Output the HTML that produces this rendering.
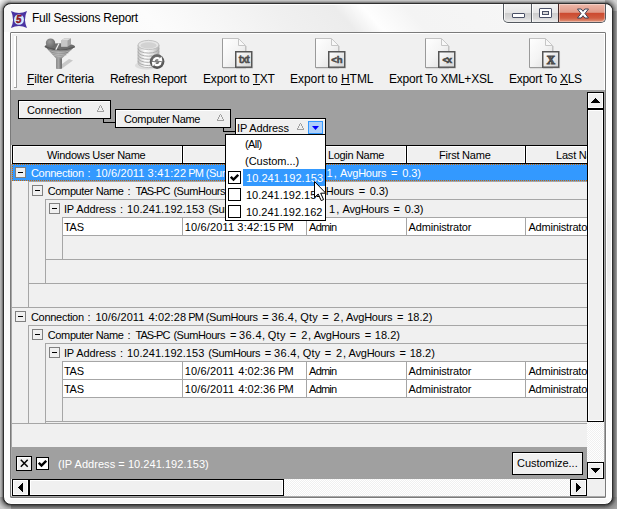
<!DOCTYPE html>
<html>
<head>
<meta charset="utf-8">
<title>Full Sessions Report</title>
<style>
html,body{margin:0;padding:0;}
body{width:617px;height:509px;overflow:hidden;position:relative;background:#fff;font-family:"Liberation Sans",sans-serif;}
*{box-sizing:border-box;}
.abs{position:absolute;}
#shadow{position:absolute;left:0;top:0;width:617px;height:509px;background:#fff;}
.sh{position:absolute;}
#win{position:absolute;left:3px;top:3px;width:610px;height:502px;border:1px solid #303030;border-radius:8px;background:#fbfbfb;box-shadow:inset 0 0 0 1px #fff;}
#client{position:absolute;left:10px;top:32px;width:596px;height:466px;border:1px solid #7a7a7a;border-radius:1px;background:#f0f0f0;box-shadow:inset 0 0 0 1px #fff;}
.t12{font-size:12px;color:#000;white-space:pre;line-height:14px;}
.t11{font-size:11px;color:#000;white-space:pre;line-height:13px;}
.lbl{position:absolute;top:72px;height:14px;}
.lbl u{text-decoration:none;border-bottom:1px solid #000;display:inline-block;line-height:10px;}
.panel{position:absolute;background:#a0a0a0;}
.gbox{position:absolute;height:19px;border:1px solid #000;background:#f0f0f0;box-shadow:inset 1px 1px 0 #fff;}
.hl{position:absolute;height:1px;background:#a6a6a6;}
.vl{position:absolute;width:1px;background:#a6a6a6;}
.blk{position:absolute;background:#000;}
.hcell{position:absolute;top:146px;height:17px;background:#f0f0f0;box-shadow:inset 0 0 0 1px #fff;}
.exp{position:absolute;width:11px;height:11px;border:1px solid #808080;background:#f0f0f0;}
.exp:after{content:"";position:absolute;left:2px;top:4px;width:5px;height:1px;background:#000;}
.cell{position:absolute;background:#fff;height:17px;}
.sbtn{position:absolute;width:17px;height:17px;border:1px solid #000;background:#f0f0f0;box-shadow:inset 0 0 0 1px #fff;}
.dither{position:absolute;background-color:#fff;background-image:linear-gradient(45deg,#f0f0f0 25%,transparent 25%,transparent 75%,#f0f0f0 75%),linear-gradient(45deg,#f0f0f0 25%,transparent 25%,transparent 75%,#f0f0f0 75%);background-size:2px 2px;background-position:0 0,1px 1px;}
.dots{background:repeating-linear-gradient(90deg,#cc6600 0 1px,#3399ff 1px 2px);}
.rowt{height:13px;overflow:visible;}
.sg{position:absolute;top:0;white-space:pre;}
.dotsv{background:repeating-linear-gradient(180deg,#cc6600 0 1px,#3399ff 1px 2px);}
.chk{position:absolute;width:13px;height:13px;border:1px solid #000;background:#fff;}
</style>
</head>
<body>
<div id="shadow"></div>
<div class="sh" style="left:0;top:11px;width:4px;height:486px;background:linear-gradient(90deg,#b4b4b4 0 1px,#a0a0a0 1px 2px,#787878 2px 3px,#303030 3px);"></div>
<div class="sh" style="left:11px;top:0;width:594px;height:4px;background:linear-gradient(180deg,#c4c4c4 0 1px,#a8a8a8 1px 2px,#808080 2px 3px,#303030 3px);"></div>
<div class="sh" style="left:612px;top:11px;width:5px;height:486px;background:linear-gradient(90deg,#303030 0 1px,#5a5a5a 1px 2px,#707070 2px 3px,#808080 3px 4px,#989898 4px);"></div>
<div class="sh" style="left:11px;top:504px;width:594px;height:5px;background:linear-gradient(180deg,#2c2c2c 0 1px,#4a4a4a 1px 2px,#606060 2px 3px,#757575 3px 4px,#888888 4px);"></div>
<div class="sh" style="left:0;top:0;width:11px;height:11px;background:radial-gradient(circle at 11px 11px,#303030 7.9px,#7c7c7c 8.5px,#a4a4a4 9.5px,#bcbcbc 10.5px,#d4d4d4 12px,#f2f2f2 15px);"></div>
<div class="sh" style="left:605px;top:0;width:12px;height:11px;background:radial-gradient(circle at 0 11px,#303030 7.9px,#6a6a6a 8.5px,#888888 9.5px,#9c9c9c 10.5px,#b0b0b0 11.5px,#d0d0d0 14px);"></div>
<div class="sh" style="left:0;top:497px;width:11px;height:12px;background:radial-gradient(circle at 11px 0,#303030 7.9px,#606060 8.5px,#808080 9.5px,#949494 10.5px,#a8a8a8 11.5px,#c8c8c8 14px);"></div>
<div class="sh" style="left:605px;top:497px;width:12px;height:12px;background:radial-gradient(circle at 0 0,#303030 7.9px,#505050 8.5px,#666666 9.5px,#787878 10.5px,#8c8c8c 11.5px,#a0a0a0 15px);"></div>
<div id="win"></div>

<div class="abs" style="left:5px;top:31px;width:5px;height:468px;background:linear-gradient(180deg,#fcfcfc 0,#fafafa 120px,#f7f7f7 190px,#f7f7f7 250px,#fdfdfd 340px);"></div>
<div class="abs" style="left:607px;top:31px;width:4px;height:468px;background:linear-gradient(180deg,#fdfdfd 0,#fdfdfd 150px,#ededed 195px,#ededed 240px,#fbfbfb 290px,#fdfdfd 468px);"></div>
<div class="abs" style="left:606px;top:31px;width:1px;height:468px;background:#fff;"></div>
<div class="abs" style="left:10px;top:499px;width:597px;height:4px;background:#f8f8f8;"></div>
<div class="abs" style="left:10px;top:498px;width:597px;height:1px;background:#fff;"></div>
<div class="abs" style="left:4px;top:5px;width:608px;height:27px;border-radius:5px 5px 0 0;background:linear-gradient(48deg,#f7f7f7 12px,#fcfcfc 118px,#f0f0f0 215px,#ececec 262px,#fefefe 283px,#f4f4f4 315px,#f6f6f6 400px,#fcfcfc 452px);"></div>
<!-- title -->
<svg class="abs" style="left:11px;top:11px" width="16" height="17" viewBox="0 0 17 17" preserveAspectRatio="none">
  <path d="M0 0 Q8.5 4.2 17 0 Q12.8 8.5 17 17 Q8.5 12.8 0 17 Q4.2 8.5 0 0Z" fill="#4a34a2"/>
  <circle cx="8.5" cy="8.5" r="5.3" fill="#d2ebff"/>
  <text x="8.3" y="12.4" font-size="10.5" font-weight="bold" font-style="italic" fill="#9c1424" stroke="#7a0c18" stroke-width=".4" text-anchor="middle" font-family="Liberation Sans, sans-serif">5</text>
</svg>
<div class="abs t12" id="title" style="left:32px;letter-spacing:-0.24px;top:11px;">Full Sessions Report</div>

<!-- caption buttons -->
<div class="abs" id="capbtns" style="left:503px;top:4px;width:103px;height:19px;border:1px solid #555a60;border-top:none;border-radius:0 0 5px 5px;overflow:hidden;background:linear-gradient(#f2f2f2,#e6e6e6 48%,#cdcdcd 52%,#dadada 80%,#eeeeee);box-shadow:1px 1px 0 rgba(255,255,255,.7),-1px 1px 0 rgba(255,255,255,.7);">
  <div class="abs" style="left:0;top:0;width:1px;height:18px;background:rgba(255,255,255,.8);"></div>
  <div class="abs" style="left:27px;top:0;width:1px;height:19px;background:#555a60;"></div>
  <div class="abs" style="left:28px;top:0;width:1px;height:18px;background:rgba(255,255,255,.8);"></div>
  <div class="abs" style="left:54px;top:0;width:1px;height:19px;background:#4a2a28;"></div>
  <div class="abs" style="left:55px;top:0;width:46px;height:18px;background:linear-gradient(#eeb8aa,#e09a88 46%,#cc4a30 52%,#d05c40 78%,#e2987e);box-shadow:inset 0 0 0 1px rgba(255,255,255,.35);border-radius:0 0 4px 0;"></div>
  <div class="abs" style="left:8px;top:9px;width:13px;height:5px;border:1px solid #4a5066;background:#fff;border-radius:1px;"></div>
  <div class="abs" style="left:35px;top:4px;width:13px;height:10px;border:1px solid #4a5066;background:#fff;border-radius:1px;"></div>
  <div class="abs" style="left:38px;top:7px;width:7px;height:4px;border:1px solid #4a5066;background:#d8d8d8;"></div>
  <svg class="abs" style="left:72px;top:4px" width="14" height="11" viewBox="0 0 14 11"><path d="M1.5 1 H5.2 L7 3.3 L8.8 1 H12.5 L9 5.5 L12.5 10 H8.8 L7 7.7 L5.2 10 H1.5 L5 5.5 Z" fill="#fff" stroke="#3b4256" stroke-width="1" stroke-linejoin="round"/></svg>
</div>

<div id="client"></div>

<!-- toolbar -->
<div class="abs" style="left:14px;top:36px;width:3px;height:52px;background:#fff;border-right:1px solid #a0a0a0;border-bottom:1px solid #a0a0a0;"></div>

<div class="lbl t12" id="l1" style="left:27px;letter-spacing:-0.11px;"><u>F</u>ilter Criteria</div>
<div class="lbl t12" id="l2" style="left:110px;letter-spacing:-0.35px;">Refresh Report</div>
<div class="lbl t12" id="l3" style="left:203px;letter-spacing:-0.18px;">Export to <u>T</u>XT</div>
<div class="lbl t12" id="l4" style="left:290px;letter-spacing:-0.04px;">Export to <u>H</u>TML</div>
<div class="lbl t12" id="l5" style="left:389px;letter-spacing:-0.24px;">Export To XML+XSL</div>
<div class="lbl t12" id="l6" style="left:509px;letter-spacing:-0.29px;">Export To <u>X</u>LS</div>

<svg width="0" height="0" style="position:absolute">
 <defs>
  <linearGradient id="pg" x1="0" y1="0" x2="1" y2="1"><stop offset="0" stop-color="#ffffff"/><stop offset=".5" stop-color="#f4f4f4"/><stop offset="1" stop-color="#dcdcdc"/></linearGradient>
  <linearGradient id="bg" x1="0" y1="0" x2="1" y2="1"><stop offset="0" stop-color="#ffffff"/><stop offset="1" stop-color="#d4d4d4"/></linearGradient>
  <linearGradient id="stem" x1="0" y1="0" x2="1" y2="0"><stop offset="0" stop-color="#8a8a8a"/><stop offset=".45" stop-color="#a8a8a8"/><stop offset="1" stop-color="#5e5e5e"/></linearGradient>
  <linearGradient id="cone" x1="0" y1="0" x2="1" y2="0"><stop offset="0" stop-color="#6a6a6a"/><stop offset=".45" stop-color="#a4a4a4"/><stop offset="1" stop-color="#666666"/></linearGradient>
  <radialGradient id="sph" cx=".4" cy=".35" r=".7"><stop offset="0" stop-color="#9c9c9c"/><stop offset="1" stop-color="#666"/></radialGradient>
  <linearGradient id="cyl" x1="0" y1="0" x2="1" y2="0"><stop offset="0" stop-color="#c8c8c8"/><stop offset=".35" stop-color="#ffffff"/><stop offset=".7" stop-color="#e2e2e2"/><stop offset="1" stop-color="#b0b0b0"/></linearGradient>
  <radialGradient id="rc" cx=".5" cy=".4" r=".6"><stop offset="0" stop-color="#8c8c8c"/><stop offset="1" stop-color="#4a4a4a"/></radialGradient>
  
 </defs>
</svg>
<!-- filter funnel -->
<svg class="abs" style="left:44px;top:38px" width="32" height="32" viewBox="0 0 32 32">
  <defs><filter id="bl" x="-20%" y="-20%" width="140%" height="140%"><feGaussianBlur stdDeviation="0.7"/></filter></defs>
  <path d="M18 30.5 L29 22.5 L25 21 L18 26 Z" fill="#b8b8b8" opacity=".7" filter="url(#bl)"/>
  <path d="M0.8 8.2 Q15.8 14.5 30.9 8.6 L17.8 20.6 V30.4 Q15 31.4 12.1 30.4 V20.6 Z" fill="url(#cone)"/>
  <rect x="12.1" y="20.4" width="5.7" height="10.2" fill="url(#stem)"/>
  <ellipse cx="15.8" cy="8.4" rx="15" ry="3.1" fill="#6e6e6e"/>
  <path d="M0.8 8.4 Q15.8 15.2 30.9 8.7" stroke="#585858" stroke-width="1.2" fill="none"/>
  <path d="M4.2 12.3 Q15.8 16.6 27.4 12.4 M6.6 14.8 Q15.8 18.4 25 14.9 M9 17.2 Q15.8 19.8 22.6 17.3" stroke="#c4c4c4" stroke-width=".8" fill="none" opacity=".75"/>
  <circle cx="6.5" cy="5.1" r="4.7" fill="url(#sph)"/>
  <path d="M17.1 2.6 L20.4 0.2 H27 V6.4 L23.5 8.7 H17.1 Z" fill="#a2a2a2"/>
  <path d="M17.1 2.6 H23.5 V8.7 H17.1 Z" fill="#c6c6c6"/>
  <path d="M17.1 2.6 L20.4 0.2 H27 L23.5 2.6 Z" fill="#dcdcdc"/>
  <path d="M15 5.4 L11.8 11.8" stroke="#f2f2f2" stroke-width="1.2"/>
</svg>
<!-- refresh db -->
<svg class="abs" style="left:132px;top:38px" width="34" height="32" viewBox="0 0 34 32">
  <ellipse cx="15" cy="27.5" rx="12" ry="4" fill="#d4d4d4" opacity=".7"/>
  <path d="M6 7 V25 A10.5 4.6 0 0 0 27 25 V7 Z" fill="url(#cyl)" stroke="#b4b4b4" stroke-width=".8"/>
  <path d="M6 10.5 A10.5 4.6 0 0 0 27 10.5 M6 13.6 A10.5 4.6 0 0 0 27 13.6 M6 16.7 A10.5 4.6 0 0 0 27 16.7 M6 19.8 A10.5 4.6 0 0 0 27 19.8 M6 22.9 A10.5 4.6 0 0 0 27 22.9" stroke="#adadad" stroke-width="1" fill="none"/>
  <ellipse cx="16.5" cy="7" rx="10.5" ry="4.6" fill="#e6e6e6" stroke="#b8b8b8" stroke-width=".8"/>
  <ellipse cx="16.5" cy="7.4" rx="8" ry="3.1" fill="#d2d2d2"/>
  <circle cx="25.1" cy="23.6" r="7.3" fill="url(#rc)"/>
  <path d="M21.6 23.2 A3.6 3.6 0 0 1 27.4 20.8" stroke="#fff" stroke-width="2.2" fill="none"/>
  <path d="M28.6 24 A3.6 3.6 0 0 1 22.8 26.4" stroke="#fff" stroke-width="2.2" fill="none"/>
  <path d="M25.6 22.6 L30.4 23.4 L29.6 18.6 Z" fill="#fff"/>
  <path d="M24.6 24.6 L19.8 23.8 L20.6 28.6 Z" fill="#fff"/>
</svg>
<!-- docs -->
<svg class="abs" style="left:222px;top:38px" width="32" height="32" viewBox="0 0 32 32"><g><path d="M1 30.6 h23" stroke="#c8c8c8" stroke-width="1" fill="none" opacity=".6"/>
   <path d="M0.5 0.5 H16.5 L23.5 7.5 V29.5 H0.5 Z" fill="url(#pg)" stroke="#c2c2c2"/>
   <path d="M0.5 0.5 V29.5 H13" fill="none" stroke="#9a9a9a"/>
   <path d="M16.5 1 V7.5 H23" fill="#f8f8f8" stroke="#c6c6c6" stroke-linejoin="round"/>
   <path d="M24.5 8 V13" stroke="#d8d8d8" fill="none"/>
   <rect x="13.75" y="13.75" width="16" height="15.5" fill="url(#bg)" stroke="#565656" stroke-width="1.5"/>
   <path d="M14 30.2 H30.6 V14" stroke="#9a9a9a" stroke-width=".8" fill="none" opacity=".5"/></g><text x="21.9" y="25.4" font-size="10.5" font-weight="bold" fill="#4c4c4c" stroke="#4c4c4c" stroke-width=".4" text-anchor="middle" letter-spacing="-0.9" font-family="Liberation Sans, sans-serif">txt</text></svg>
<svg class="abs" style="left:315px;top:38px" width="32" height="32" viewBox="0 0 32 32"><g><path d="M1 30.6 h23" stroke="#c8c8c8" stroke-width="1" fill="none" opacity=".6"/>
   <path d="M0.5 0.5 H16.5 L23.5 7.5 V29.5 H0.5 Z" fill="url(#pg)" stroke="#c2c2c2"/>
   <path d="M0.5 0.5 V29.5 H13" fill="none" stroke="#9a9a9a"/>
   <path d="M16.5 1 V7.5 H23" fill="#f8f8f8" stroke="#c6c6c6" stroke-linejoin="round"/>
   <path d="M24.5 8 V13" stroke="#d8d8d8" fill="none"/>
   <rect x="13.75" y="13.75" width="16" height="15.5" fill="url(#bg)" stroke="#565656" stroke-width="1.5"/>
   <path d="M14 30.2 H30.6 V14" stroke="#9a9a9a" stroke-width=".8" fill="none" opacity=".5"/></g><text x="21.9" y="25.2" font-size="9.5" font-weight="bold" fill="#484848" stroke="#484848" stroke-width=".55" text-anchor="middle" letter-spacing="0" font-family="Liberation Sans, sans-serif">&lt;h</text></svg>
<svg class="abs" style="left:425px;top:38px" width="32" height="32" viewBox="0 0 32 32"><g><path d="M1 30.6 h23" stroke="#c8c8c8" stroke-width="1" fill="none" opacity=".6"/>
   <path d="M0.5 0.5 H16.5 L23.5 7.5 V29.5 H0.5 Z" fill="url(#pg)" stroke="#c2c2c2"/>
   <path d="M0.5 0.5 V29.5 H13" fill="none" stroke="#9a9a9a"/>
   <path d="M16.5 1 V7.5 H23" fill="#f8f8f8" stroke="#c6c6c6" stroke-linejoin="round"/>
   <path d="M24.5 8 V13" stroke="#d8d8d8" fill="none"/>
   <rect x="13.75" y="13.75" width="16" height="15.5" fill="url(#bg)" stroke="#565656" stroke-width="1.5"/>
   <path d="M14 30.2 H30.6 V14" stroke="#9a9a9a" stroke-width=".8" fill="none" opacity=".5"/></g><text x="21.7" y="24.8" font-size="9.5" font-weight="bold" fill="#484848" stroke="#484848" stroke-width=".6" text-anchor="middle" letter-spacing="-1.2" font-family="Liberation Sans, sans-serif">&lt;x</text></svg>
<svg class="abs" style="left:529px;top:38px" width="32" height="32" viewBox="0 0 32 32"><g><path d="M1 30.6 h23" stroke="#c8c8c8" stroke-width="1" fill="none" opacity=".6"/>
   <path d="M0.5 0.5 H16.5 L23.5 7.5 V29.5 H0.5 Z" fill="url(#pg)" stroke="#c2c2c2"/>
   <path d="M0.5 0.5 V29.5 H13" fill="none" stroke="#9a9a9a"/>
   <path d="M16.5 1 V7.5 H23" fill="#f8f8f8" stroke="#c6c6c6" stroke-linejoin="round"/>
   <path d="M24.5 8 V13" stroke="#d8d8d8" fill="none"/>
   <rect x="13.75" y="13.75" width="16" height="15.5" fill="url(#bg)" stroke="#565656" stroke-width="1.5"/>
   <path d="M14 30.2 H30.6 V14" stroke="#9a9a9a" stroke-width=".8" fill="none" opacity=".5"/></g><text x="21.8" y="26.2" font-size="11.5" font-weight="bold" fill="#6a6a6a" stroke="#484848" stroke-width="1" text-anchor="middle" font-family="Liberation Serif, serif">X</text></svg>


<!-- group panel -->
<div class="panel" style="left:11px;top:90px;width:576px;height:56px;"></div>
<div class="blk" style="left:103px;top:119px;width:1px;height:4px;"></div>
<div class="blk" style="left:103px;top:122px;width:13px;height:1px;"></div>
<div class="blk" style="left:223px;top:128px;width:1px;height:4px;"></div>
<div class="blk" style="left:223px;top:131px;width:13px;height:1px;"></div>
<div class="gbox" style="left:18px;top:100px;width:93px;"></div>
<div class="gbox" style="left:115px;top:109px;width:116px;"></div>
<div class="gbox" style="left:235px;top:118px;width:91px;"></div>
<div class="abs t11" id="g1" style="left:27px;letter-spacing:-0.12px;top:104px;">Connection</div>
<div class="abs t11" id="g2" style="left:124px;letter-spacing:-0.36px;top:113px;">Computer Name</div>
<div class="abs t11" id="g3" style="left:237px;letter-spacing:-0.11px;top:122px;">IP Address</div>

<!-- grid area -->
<div class="abs" style="left:11px;top:145px;width:576px;height:302px;background:#f0f0f0;"></div>

<div class="blk" style="left:12px;top:145px;width:575px;height:1px;"></div>
<div class="blk" style="left:12px;top:163px;width:575px;height:1px;"></div>
<div class="blk" style="left:12px;top:145px;width:1px;height:19px;"></div>
<div class="hcell" style="left:13px;width:169px;"></div>
<div class="blk" style="left:182px;top:145px;width:1px;height:19px;"></div>
<div class="hcell" style="left:183px;width:123px;"></div>
<div class="blk" style="left:306px;top:145px;width:1px;height:19px;"></div>
<div class="hcell" style="left:307px;width:99px;"></div>
<div class="blk" style="left:406px;top:145px;width:1px;height:19px;"></div>
<div class="hcell" style="left:407px;width:118px;"></div>
<div class="blk" style="left:525px;top:145px;width:1px;height:19px;"></div>
<div class="hcell" style="left:526px;width:61px;"></div>
<div class="abs t11" id="h1" style="left:47px;letter-spacing:-0.29px;top:149px;">Windows User Name</div>
<div class="abs t11" id="h3" style="left:328px;letter-spacing:-0.33px;top:149px;">Login Name</div>
<div class="abs t11" id="h4" style="left:439px;letter-spacing:-0.22px;top:149px;">First Name</div>
<div class="abs" style="left:526px;top:146px;width:61px;height:17px;overflow:hidden;"><div class="abs t11" id="h5" style="left:30px;top:3px;letter-spacing:-0.2px;">Last Name</div></div>
<div class="vl" style="left:11px;top:164px;height:283px;"></div>
<div class="abs" style="left:12px;top:164px;width:575px;height:17px;background:#3399ff;"></div>
<div class="abs dots" style="left:12px;top:164px;width:575px;height:1px;"></div>
<div class="abs dots" style="left:12px;top:180px;width:575px;height:1px;"></div>
<div class="abs dotsv" style="left:12px;top:164px;width:1px;height:17px;"></div>
<div class="exp" style="left:15px;top:167px;"></div>
<div class="abs t11 rowt" style="left:0;top:167px;width:587px;color:#fff;"><span class="sg" style="left:30.9px;letter-spacing:-0.28px;">Connection </span><span class="sg" style="left:87.6px;letter-spacing:0px;">: </span><span class="sg" style="left:95.4px;letter-spacing:0.11px;">10/6/2011 </span><span class="sg" style="left:147.5px;letter-spacing:0.32px;">3:41:22 </span><span class="sg" style="left:188.3px;letter-spacing:-1.0px;">PM </span><span class="sg" style="left:205.8px;letter-spacing:-0.42px;">(SumHours </span><span class="sg" style="left:262.3px;letter-spacing:0px;">= </span><span class="sg" style="left:272.4px;letter-spacing:0.17px;">0.3, </span><span class="sg" style="left:294.2px;letter-spacing:0.25px;">Qty </span><span class="sg" style="left:316.2px;letter-spacing:0px;">= </span><span class="sg" style="left:326.6px;letter-spacing:1.0px;">1, </span><span class="sg" style="left:340.1px;letter-spacing:-0.24px;">AvgHours </span><span class="sg" style="left:391.1px;letter-spacing:0px;">= </span><span class="sg" style="left:402.2px;letter-spacing:-0.1px;">0.3) </span></div>
<div class="hl" style="left:28px;top:181px;width:559px;"></div>
<div class="exp" style="left:32px;top:185px;"></div>
<div class="abs t11 rowt" style="left:0;top:185px;width:587px;"><span class="sg" style="left:47.8px;letter-spacing:-0.38px;">Computer Name </span><span class="sg" style="left:127.5px;letter-spacing:0px;">: </span><span class="sg" style="left:135.4px;letter-spacing:-0.9px;">TAS-PC </span><span class="sg" style="left:173.4px;letter-spacing:-0.43px;">(SumHours </span><span class="sg" style="left:229.9px;letter-spacing:0px;">= </span><span class="sg" style="left:240.0px;letter-spacing:0.17px;">0.3, </span><span class="sg" style="left:261.8px;letter-spacing:0.25px;">Qty </span><span class="sg" style="left:283.8px;letter-spacing:0px;">= </span><span class="sg" style="left:294.2px;letter-spacing:1.0px;">1, </span><span class="sg" style="left:307.7px;letter-spacing:-0.24px;">AvgHours </span><span class="sg" style="left:358.7px;letter-spacing:0px;">= </span><span class="sg" style="left:369.8px;letter-spacing:-0.1px;">0.3) </span></div>
<div class="hl" style="left:45px;top:199px;width:542px;"></div>
<div class="exp" style="left:49px;top:203px;"></div>
<div class="abs t11 rowt" style="left:0;top:203px;width:587px;"><span class="sg" style="left:63.9px;letter-spacing:-0.11px;">IP Address </span><span class="sg" style="left:119.9px;letter-spacing:0px;">: </span><span class="sg" style="left:127.1px;letter-spacing:0.06px;">10.241.192.153 </span><span class="sg" style="left:208.3px;letter-spacing:-0.42px;">(SumHours </span><span class="sg" style="left:264.8px;letter-spacing:0px;">= </span><span class="sg" style="left:274.9px;letter-spacing:0.17px;">0.3, </span><span class="sg" style="left:296.7px;letter-spacing:0.25px;">Qty </span><span class="sg" style="left:318.7px;letter-spacing:0px;">= </span><span class="sg" style="left:329.1px;letter-spacing:1.0px;">1, </span><span class="sg" style="left:342.6px;letter-spacing:-0.24px;">AvgHours </span><span class="sg" style="left:393.6px;letter-spacing:0px;">= </span><span class="sg" style="left:404.7px;letter-spacing:-0.1px;">0.3) </span></div>
<div class="hl" style="left:62px;top:217px;width:525px;"></div>
<div class="exp" style="left:15px;top:311px;"></div>
<div class="abs t11 rowt" style="left:0;top:311px;width:587px;"><span class="sg" style="left:30.9px;letter-spacing:-0.28px;">Connection </span><span class="sg" style="left:87.6px;letter-spacing:0px;">: </span><span class="sg" style="left:95.4px;letter-spacing:0.11px;">10/6/2011 </span><span class="sg" style="left:148.5px;letter-spacing:0.15px;">4:02:28 </span><span class="sg" style="left:188.3px;letter-spacing:-1.0px;">PM </span><span class="sg" style="left:205.8px;letter-spacing:-0.42px;">(SumHours </span><span class="sg" style="left:262.3px;letter-spacing:0px;">= </span><span class="sg" style="left:271.4px;letter-spacing:0.38px;">36.4, </span><span class="sg" style="left:300.2px;letter-spacing:0.25px;">Qty </span><span class="sg" style="left:322.2px;letter-spacing:0px;">= </span><span class="sg" style="left:333.6px;letter-spacing:0.8px;">2, </span><span class="sg" style="left:346.1px;letter-spacing:-0.24px;">AvgHours </span><span class="sg" style="left:397.1px;letter-spacing:0px;">= </span><span class="sg" style="left:407.2px;letter-spacing:0.02px;">18.2) </span></div>
<div class="hl" style="left:28px;top:325px;width:559px;"></div>
<div class="exp" style="left:32px;top:329px;"></div>
<div class="abs t11 rowt" style="left:0;top:329px;width:587px;"><span class="sg" style="left:47.8px;letter-spacing:-0.38px;">Computer Name </span><span class="sg" style="left:127.5px;letter-spacing:0px;">: </span><span class="sg" style="left:135.4px;letter-spacing:-0.9px;">TAS-PC </span><span class="sg" style="left:173.4px;letter-spacing:-0.43px;">(SumHours </span><span class="sg" style="left:229.9px;letter-spacing:0px;">= </span><span class="sg" style="left:239.0px;letter-spacing:0.38px;">36.4, </span><span class="sg" style="left:267.8px;letter-spacing:0.25px;">Qty </span><span class="sg" style="left:289.8px;letter-spacing:0px;">= </span><span class="sg" style="left:301.2px;letter-spacing:0.8px;">2, </span><span class="sg" style="left:313.7px;letter-spacing:-0.24px;">AvgHours </span><span class="sg" style="left:364.7px;letter-spacing:0px;">= </span><span class="sg" style="left:374.8px;letter-spacing:0.02px;">18.2) </span></div>
<div class="hl" style="left:45px;top:343px;width:542px;"></div>
<div class="exp" style="left:49px;top:347px;"></div>
<div class="abs t11 rowt" style="left:0;top:347px;width:587px;"><span class="sg" style="left:63.9px;letter-spacing:-0.11px;">IP Address </span><span class="sg" style="left:119.9px;letter-spacing:0px;">: </span><span class="sg" style="left:127.1px;letter-spacing:0.06px;">10.241.192.153 </span><span class="sg" style="left:208.3px;letter-spacing:-0.42px;">(SumHours </span><span class="sg" style="left:264.8px;letter-spacing:0px;">= </span><span class="sg" style="left:273.9px;letter-spacing:0.38px;">36.4, </span><span class="sg" style="left:302.7px;letter-spacing:0.25px;">Qty </span><span class="sg" style="left:324.7px;letter-spacing:0px;">= </span><span class="sg" style="left:336.1px;letter-spacing:0.8px;">2, </span><span class="sg" style="left:348.6px;letter-spacing:-0.24px;">AvgHours </span><span class="sg" style="left:399.6px;letter-spacing:0px;">= </span><span class="sg" style="left:409.7px;letter-spacing:0.02px;">18.2) </span></div>
<div class="hl" style="left:62px;top:361px;width:525px;"></div>
<div class="cell" style="left:63px;top:218px;width:524px;"></div>
<div class="vl" style="left:182px;top:218px;height:17px;"></div>
<div class="vl" style="left:306px;top:218px;height:17px;"></div>
<div class="vl" style="left:406px;top:218px;height:17px;"></div>
<div class="vl" style="left:525px;top:218px;height:17px;"></div>
<div class="abs t11 rowt" style="left:0;top:221px;width:587px;"><span class="sg" style="left:63.9px;letter-spacing:-0.2px;">TAS </span><span class="sg" style="left:184.7px;letter-spacing:0.15px;">10/6/2011 </span><span class="sg" style="left:237.3px;letter-spacing:0.23px;">3:42:15 </span><span class="sg" style="left:278.1px;letter-spacing:-1.0px;">PM </span><span class="sg" style="left:309.1px;letter-spacing:-0.8px;">Admin </span><span class="sg" style="left:408.5px;letter-spacing:-0.15px;">Administrator </span></div>
<div class="abs" style="left:526px;top:218px;width:61px;height:17px;overflow:hidden;"><div class="abs t11" style="left:2.4px;top:3px;letter-spacing:-0.2px;">Administrator</div></div>
<div class="hl" style="left:63px;top:235px;width:524px;"></div>
<div class="cell" style="left:63px;top:362px;width:524px;"></div>
<div class="vl" style="left:182px;top:362px;height:17px;"></div>
<div class="vl" style="left:306px;top:362px;height:17px;"></div>
<div class="vl" style="left:406px;top:362px;height:17px;"></div>
<div class="vl" style="left:525px;top:362px;height:17px;"></div>
<div class="abs t11 rowt" style="left:0;top:365px;width:587px;"><span class="sg" style="left:63.9px;letter-spacing:-0.2px;">TAS </span><span class="sg" style="left:184.7px;letter-spacing:0.15px;">10/6/2011 </span><span class="sg" style="left:238.3px;letter-spacing:0.07px;">4:02:36 </span><span class="sg" style="left:278.1px;letter-spacing:-1.0px;">PM </span><span class="sg" style="left:309.1px;letter-spacing:-0.8px;">Admin </span><span class="sg" style="left:408.5px;letter-spacing:-0.15px;">Administrator </span></div>
<div class="abs" style="left:526px;top:362px;width:61px;height:17px;overflow:hidden;"><div class="abs t11" style="left:2.4px;top:3px;letter-spacing:-0.2px;">Administrator</div></div>
<div class="hl" style="left:63px;top:379px;width:524px;"></div>
<div class="cell" style="left:63px;top:380px;width:524px;"></div>
<div class="vl" style="left:182px;top:380px;height:17px;"></div>
<div class="vl" style="left:306px;top:380px;height:17px;"></div>
<div class="vl" style="left:406px;top:380px;height:17px;"></div>
<div class="vl" style="left:525px;top:380px;height:17px;"></div>
<div class="abs t11 rowt" style="left:0;top:383px;width:587px;"><span class="sg" style="left:63.9px;letter-spacing:-0.2px;">TAS </span><span class="sg" style="left:184.7px;letter-spacing:0.15px;">10/6/2011 </span><span class="sg" style="left:238.3px;letter-spacing:0.07px;">4:02:36 </span><span class="sg" style="left:278.1px;letter-spacing:-1.0px;">PM </span><span class="sg" style="left:309.1px;letter-spacing:-0.8px;">Admin </span><span class="sg" style="left:408.5px;letter-spacing:-0.15px;">Administrator </span></div>
<div class="abs" style="left:526px;top:380px;width:61px;height:17px;overflow:hidden;"><div class="abs t11" style="left:2.4px;top:3px;letter-spacing:-0.2px;">Administrator</div></div>
<div class="hl" style="left:63px;top:397px;width:524px;"></div>
<div class="hl" style="left:46px;top:259px;width:541px;"></div>
<div class="hl" style="left:29px;top:283px;width:558px;"></div>
<div class="hl" style="left:12px;top:307px;width:575px;"></div>
<div class="vl" style="left:28px;top:182px;height:125px;"></div>
<div class="vl" style="left:45px;top:200px;height:83px;"></div>
<div class="vl" style="left:62px;top:218px;height:41px;"></div>
<div class="hl" style="left:46px;top:421px;width:541px;"></div>
<div class="hl" style="left:12px;top:423px;width:575px;"></div>
<div class="vl" style="left:28px;top:326px;height:97px;"></div>
<div class="vl" style="left:45px;top:344px;height:79px;"></div>
<div class="vl" style="left:62px;top:362px;height:59px;"></div>


<!-- sort triangles + dropdown button in group boxes -->
<svg class="abs" style="left:97px;top:105px" width="7" height="7" viewBox="0 0 7 7" shape-rendering="crispEdges"><path d="M3 0h1v1h-1zM2 1h1v2h-1zM4 1h1v2h-1zM1 3h1v2h-1zM5 3h1v2h-1zM0 5h1v1h-1zM6 5h1v1h-1zM0 6h7v1h-7z" fill="#a0a0a0"/></svg>
<svg class="abs" style="left:217px;top:114px" width="7" height="7" viewBox="0 0 7 7" shape-rendering="crispEdges"><path d="M3 0h1v1h-1zM2 1h1v2h-1zM4 1h1v2h-1zM1 3h1v2h-1zM5 3h1v2h-1zM0 5h1v1h-1zM6 5h1v1h-1zM0 6h7v1h-7z" fill="#a0a0a0"/></svg>
<svg class="abs" style="left:297px;top:123px" width="7" height="7" viewBox="0 0 7 7" shape-rendering="crispEdges"><path d="M3 0h1v1h-1zM2 1h1v2h-1zM4 1h1v2h-1zM1 3h1v2h-1zM5 3h1v2h-1zM0 5h1v1h-1zM6 5h1v1h-1zM0 6h7v1h-7z" fill="#a0a0a0"/></svg>
<div class="abs" style="left:308px;top:121px;width:15px;height:13px;border:1px solid #3399ff;background:#aed0fa;"></div>
<svg class="abs" style="left:312px;top:126px" width="7" height="4" viewBox="0 0 7 4"><path d="M0 0H7L3.5 4Z" fill="#0000ff"/></svg>

<!-- popup -->
<div class="abs" id="popup" style="left:225px;top:134px;width:101px;height:87px;border:1px solid #000;background:#fff;"></div>
<div class="abs" style="left:243px;top:169px;width:82px;height:17px;background:#3399ff;"></div>
<div class="abs t11" id="p1" style="left:245px;letter-spacing:-0.58px;top:138px;">(All)</div>
<div class="abs t11" id="p2" style="left:245px;letter-spacing:-0.02px;top:155px;">(Custom...)</div>
<div class="abs t11" id="p3" style="left:246px;letter-spacing:0.05px;top:172px;color:#fff;">10.241.192.153</div>
<div class="abs t11" id="p4" style="left:246px;top:189px;">10.241.192.154</div>
<div class="abs t11" id="p5" style="left:246px;top:206px;">10.241.192.162</div>
<div class="chk" style="left:228px;top:171px;"></div>
<div class="chk" style="left:228px;top:188px;"></div>
<div class="chk" style="left:228px;top:205px;"></div>
<svg class="abs" style="left:230px;top:173px" width="9" height="9" viewBox="0 0 9 9"><path d="M0.8 3.8 L3.5 6.5 L8.2 1.8" stroke="#000" stroke-width="2.4" fill="none"/></svg>
<!-- cursor -->
<svg class="abs" style="left:314px;top:181px" width="13" height="21" viewBox="0 0 13 21"><path d="M0.5 0.5 V16.5 L4.2 13 L7.2 19.6 L9.6 18.6 L6.7 12.2 H11.8 Z" fill="#fff" stroke="#000" stroke-width="1" stroke-linejoin="miter"/></svg>

<!-- vertical scrollbar -->
<div class="dither" style="left:587px;top:90px;width:17px;height:390px;"></div>
<div class="abs" style="left:587px;top:90px;width:17px;height:2px;background:#a0a0a0;"></div>
<div class="sbtn" style="left:587px;top:92px;"></div>
<svg class="abs" style="left:591px;top:98px" width="9" height="5" viewBox="0 0 9 5" shape-rendering="crispEdges"><path d="M4 0h1v1h1v1h1v1h1v1h1v1H0v-1h1v-1h1v-1h1v-1h1z" fill="#000"/></svg>
<div class="sbtn" style="left:587px;top:109px;height:313px;"></div>
<div class="sbtn" style="left:587px;top:462px;"></div>
<svg class="abs" style="left:591px;top:468px" width="9" height="5" viewBox="0 0 9 5" shape-rendering="crispEdges"><path d="M0 0h9v1h-1v1h-1v1h-1v1h-1v1h-1v-1h-1v-1h-1v-1h-1v-1h-1z" fill="#000"/></svg>

<!-- filter panel -->
<div class="panel" style="left:11px;top:447px;width:576px;height:32px;"></div>
<div class="gbox" style="left:16px;top:456px;width:16px;height:15px;"></div>
<svg class="abs" style="left:20px;top:459px" width="9" height="9" viewBox="0 0 9 9"><path d="M0.8 0.8 L7.7 7.7 M7.7 0.8 L0.8 7.7" stroke="#000" stroke-width="1.5" fill="none"/></svg>
<div class="chk" style="left:36px;top:457px;"></div>
<svg class="abs" style="left:38px;top:459px" width="9" height="9" viewBox="0 0 9 9"><path d="M0.8 3.8 L3.5 6.5 L8.2 1.8" stroke="#000" stroke-width="2.4" fill="none"/></svg>
<div class="abs t11" id="f1" style="left:58px;letter-spacing:0.05px;top:458px;color:#fff;">(IP Address = 10.241.192.153)</div>
<div class="gbox" style="left:512px;top:452px;width:71px;height:23px;"></div>
<div class="abs t11" id="cz" style="left:517px;letter-spacing:-0.04px;top:457px;">Customize...</div>

<!-- horizontal scrollbar -->
<div class="abs" style="left:604px;top:90px;width:1px;height:407px;background:#a8a8a8;"></div>
<div class="abs" style="left:11px;top:496px;width:594px;height:1px;background:#a8a8a8;"></div>
<div class="abs" style="left:11px;top:447px;width:1px;height:50px;background:#a8a8a8;"></div>
<div class="dither" style="left:11px;top:479px;width:576px;height:17px;"></div>
<div class="abs" style="left:11px;top:479px;width:1px;height:17px;background:#f0f0f0;"></div>
<div class="abs" style="left:587px;top:479px;width:18px;height:17px;background:#f0f0f0;"></div>
<div class="sbtn" style="left:12px;top:479px;"></div>
<svg class="abs" style="left:18px;top:483px" width="5" height="9" viewBox="0 0 5 9" shape-rendering="crispEdges"><path d="M0 4v1h1v1h1v1h1v1h1v1h1V0h-1v1h-1v1h-1v1h-1v1z" fill="#000"/></svg>
<div class="sbtn" style="left:29px;top:479px;width:255px;"></div>
<div class="sbtn" style="left:570px;top:479px;"></div>
<svg class="abs" style="left:576px;top:483px" width="5" height="9" viewBox="0 0 5 9" shape-rendering="crispEdges"><path d="M5 4v1h-1v1h-1v1h-1v1h-1v1h-1V0h1v1h1v1h1v1h1v1z" fill="#000"/></svg>

</body>
</html>
